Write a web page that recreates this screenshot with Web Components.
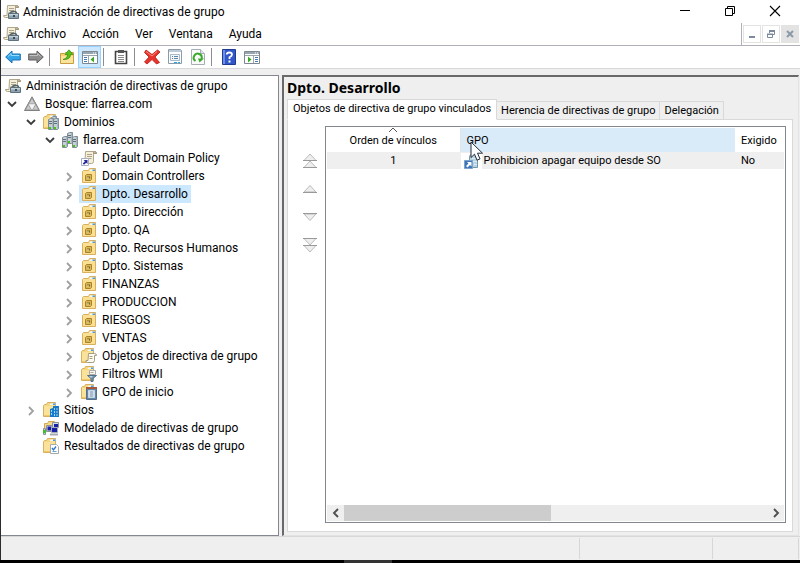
<!DOCTYPE html>
<html lang="es">
<head>
<meta charset="utf-8">
<title>Administración de directivas de grupo</title>
<style>
html, body { height: 100%; margin: 0; background: #000; }
body { font: 12px/18px Roboto, "Liberation Sans", sans-serif; color: #000; }
</style>
</head>
<body>
<gp-window>
  <title-bar slot="title">Administración de directivas de grupo</title-bar>
  <menu-bar slot="menu"></menu-bar>
  <tool-bar slot="tools"></tool-bar>
  <policy-tree slot="tree">
    <tree-node level="0" icon="console">Administración de directivas de grupo</tree-node>
    <tree-node level="1" icon="forest" state="open">Bosque: flarrea.com</tree-node>
    <tree-node level="2" icon="domains" state="open">Dominios</tree-node>
    <tree-node level="3" icon="domain" state="open">flarrea.com</tree-node>
    <tree-node level="4" icon="policy">Default Domain Policy</tree-node>
    <tree-node level="4" icon="ou" state="closed">Domain Controllers</tree-node>
    <tree-node level="4" icon="ou" state="closed" selected>Dpto. Desarrollo</tree-node>
    <tree-node level="4" icon="ou" state="closed">Dpto. Dirección</tree-node>
    <tree-node level="4" icon="ou" state="closed">Dpto. QA</tree-node>
    <tree-node level="4" icon="ou" state="closed">Dpto. Recursos Humanos</tree-node>
    <tree-node level="4" icon="ou" state="closed">Dpto. Sistemas</tree-node>
    <tree-node level="4" icon="ou" state="closed">FINANZAS</tree-node>
    <tree-node level="4" icon="ou" state="closed">PRODUCCION</tree-node>
    <tree-node level="4" icon="ou" state="closed">RIESGOS</tree-node>
    <tree-node level="4" icon="ou" state="closed">VENTAS</tree-node>
    <tree-node level="4" icon="objects" state="closed">Objetos de directiva de grupo</tree-node>
    <tree-node level="4" icon="wmi" state="closed">Filtros WMI</tree-node>
    <tree-node level="4" icon="starter" state="closed">GPO de inicio</tree-node>
    <tree-node level="2" icon="sites" state="closed">Sitios</tree-node>
    <tree-node level="2" icon="modeling">Modelado de directivas de grupo</tree-node>
    <tree-node level="2" icon="results">Resultados de directivas de grupo</tree-node>
  </policy-tree>
  <detail-pane slot="detail">
    <span slot="heading">Dpto. Desarrollo</span>
    <order-buttons></order-buttons>
    <link-list></link-list>
  </detail-pane>
  <status-bar slot="status"></status-bar>
</gp-window>

<script>
const folder = `<path d="M.5 3.500l1-1h2l1-2h8v14H.5z" fill="#f7d77f" stroke="#d9b060"/><path d="M1 4h7l1-1h3v11H1z" fill="#fbe29b"/><path d="M7.500 1.500h5v1.500h-6z" fill="#eef6ff"/><path d="M10 1.500h2.500v1.500H10z" fill="#4b9be0"/><path d="M1 13h11v1H1z" fill="#efc869"/>`;
const server = (x, y) => `<g transform="translate(${x} ${y})"><path d="M.5 1.500l2-1h3v10l-1 1h-4z" fill="#c5d0d6" stroke="#7d8b93"/><path d="M4.500 1v10l1-1V.5z" fill="#8d9aa3"/><path d="M1 3.500h3M1 5.500h3" stroke="#5f717c"/><path d="M1 9h2v2H1z" fill="#40c814"/></g>`;
const scroll = `<path d="M4.500 1.500h9q2 0 2 2h-3v8q0 2-2 2h-8q-2 0-2-2h3.500z" fill="#f5efd8" stroke="#b0a78c"/><path d="M12.500 3.500q0-2 1-2 2 0 2 2z" fill="#cbbf9d" stroke="#9f967d"/><path d="M6 4.500h5M6 6.500h5M5.500 8.500h5" stroke="#aba48f"/>`;
const arrowBox = `<path d="M.5 8.500h7v7h-7z" fill="#fff" stroke="#a7afc8"/><path d="M2.500 10H6.500v4l-1.300-1.300L3 14.800 1.800 13.500l2.200-2.200z" fill="#26269a"/>`;
const ICONS = {
  console: `${scroll}<path d="M7.500 9.500q0-2 2-2h2q2 0 2 2" fill="none" stroke="#55646d" stroke-width="1.500"/><path d="M5.500 9.500h10v5h-10z" fill="#8ea2af" stroke="#5d707c"/><path d="M6 10h9v1.500H6z" fill="#c3d1da"/><path d="M10 11h2v2h-2z" fill="#3d4b54"/>`,
  forest: `<path d="M8 .8L15.500 14.500H.5z" fill="#b9b9b9" stroke="#7a7a7a"/><path d="M8 2L11.500 8h-7zM4.300 8.500L7.700 14H1.300zM11.700 8.500L14.800 14H8.300z" fill="#c8c8c8" stroke="#8c8c8c" stroke-width=".7"/><path d="M4.800 8.300h6.400L8 14z" fill="#f4f4f4"/>`,
  domains: `${folder}${server(8, 2)}${server(5, 4)}${server(10, 4)}`,
  domain: `${server(5, 0)}${server(0, 4)}${server(10, 4)}`,
  policy: `${scroll}${arrowBox}`,
  ou: `<g transform="translate(1 0)"><path d="M.5 3.500l1-1h5l1-2h6v14H.5z" fill="#fbdf92" stroke="#d9b060"/><path d="M8 1.500h5v1.500H7.500z" fill="#eef6ff"/><path d="M10.500 1.500H13v1.500h-2.500z" fill="#4b9be0"/><path d="M3.500 7.500l1-1h5v5l-1 1h-5z" fill="#d9b653" stroke="#a5832a"/><path d="M5 8.500h3v2H5z" fill="#7d6420"/><path d="M5 9.500h2v1H5z" fill="#fff2bd"/></g>`,
  objects: `${folder}<path d="M7.500 5.500h6q2 0 2 2h-2v5q0 2-2 2h-5q-2 0-1.500-2h2z" fill="#fffdf0" stroke="#a49b84"/><path d="M8.500 8.500h3M8.500 10.500h3" stroke="#a69c80"/>`,
  wmi: `${folder}<path d="M8.500 4.500h6v4h-6z" fill="#f8f8f0" stroke="#aaa"/><path d="M9.500 6.500h3" stroke="#aaa"/><path d="M6.500 9.500h9l-3.500 3v3h-2v-3z" fill="#6f93b3" stroke="#56738c"/><path d="M8 10h4l-2 2z" fill="#b5cfe4"/>`,
  starter: `${folder}<path d="M5.500 4.500h10v11h-10z" fill="#6688a6" stroke="#557089"/><path d="M5 3h11v2H5z" fill="#a65838"/><path d="M7.500 6.500h6v7h-6z" fill="#fff" stroke="#c6d9e8"/><path d="M8.500 8h4M8.500 10h4M8.500 12h4" stroke="#5678a0"/>`,
  sites: `${folder}<path d="M7 7l3-1v-2h6v11H7z" fill="#1879c9"/><path d="M8 8h1v2H8zM8 11h1v2H8zM11 6h1v2h-1zM13.500 6h1v2h-1zM11 9h1v2h-1zM13.500 9h1v2h-1zM11 12h1v2h-1zM13.500 12h1v2h-1z" fill="#9ad8ff"/>`,
  modeling: `<path d="M1.500 3.500h3l1-2h6v8h-10z" fill="#f6da87" stroke="#cda95a"/><path d="M9.500 2.500h6v5h-6zM3.500 5.500h6v6h-6z" fill="#d9dce0" stroke="#8b9097"/><path d="M11 4h4v3h-4zM4.500 6.500h4v4h-4zM9 8h5v4H9z" fill="#1820a8"/><path d="M8.500 7.500h6v5h-6z" fill="none" stroke="#a5abb3"/><path d="M7 14.500h8" stroke="#a5abb3" stroke-width="2"/><path d="M.5 8.500h2v6h-2z" fill="#c4cdd0" stroke="#8b9097"/><path d="M0 10h3v3H0z" fill="#40c030"/>`,
  results: `${folder}<path d="M7.500 6.500h6l2 2v7h-8z" fill="#fff" stroke="#aaa"/><path d="M9 10l1.500 2L13 8.500" fill="none" stroke="#2d76c4" stroke-width="1.300"/><path d="M9.500 13.500h4" stroke="#69a5d8"/>`,
  link: `<path d="M5.500 3.500q0-2 3-2h3q2 0 2 3v10h-8z" fill="#b9d4de" stroke="#7196a8"/><path d="M8 5.500h4M9 8.500h4M10 11.500h3" stroke="#dcebf0"/><path d="M.5 7.500h8v8h-8z" fill="#3e75b6" stroke="#7ba2d0"/><path d="M3 9h4.500v4.500L6 12l-2.500 2.500L2 13l2.500-2.500z" fill="#fff"/>`,
  back: `<path d="M.7 8L7 2v3h8.300v6H7v3z" fill="#35a5e8" stroke="#1b70b2"/><path d="M3 7.500L6.200 4.500v2h8" fill="none" stroke="#9adcff"/>`,
  forward: `<path d="M15.300 8L9 2v3H.7v6H9v3z" fill="#8d8d8d" stroke="#5c5c5c"/><path d="M1.500 6.500h8v-2l3 3" fill="none" stroke="#c2c2c2"/>`,
  up: `<path d="M1.500 4.500h4l1-1h8v11h-13z" fill="#f5d174" stroke="#c79d42"/><path d="M2 7h12v7H2z" fill="#fbe39d"/><path d="M4 10.500Q8.500 9.500 8.500 5.500H6L10 .8l4 4.700h-2.500Q11.500 11 4 10.500z" fill="#52c31c" stroke="#2e8a0e" stroke-width=".7"/>`,
  showtree: `<path d="M.5 2.500h15v12H.5z" fill="#fff" stroke="#7d8890"/><path d="M1 3h14v2H1z" fill="#96a5af"/><path d="M11 4h1M13 4h1" stroke="#fff"/><path d="M1 6.500h14M6.500 7v7" stroke="#9aa5ac"/><path d="M2 8.500h3M2 10.500h3M2 12.500h3" stroke="#437ab4"/><path d="M12 7.500v6l-3.500-3z" fill="#39aa20"/>`,
  showpane: `<path d="M.5 2.500h15v12H.5z" fill="#fff" stroke="#7d8890"/><path d="M1 3h14v2H1z" fill="#96a5af"/><path d="M11 4h1M13 4h1" stroke="#fff"/><path d="M1 6.500h14M9.500 7v7" stroke="#9aa5ac"/><path d="M11 8.500h3M11 10.500h3M11 12.500h3" stroke="#437ab4"/><path d="M4 7.500v6l3.500-3z" fill="#39aa20"/>`,
  clipboard: `<path d="M2.500 2.500h11v12h-11z" fill="#fff" stroke="#444" stroke-width="1.600"/><path d="M5 1h6v3H5z" fill="#555"/><path d="M5 6.500h6M5 8.500h6M5 10.500h6M5 12.500h6" stroke="#888"/>`,
  remove: `<path d="M2 1l6 4.500L13.500 1 16 3l-5 5 4.500 5.500-3 1.500L8 10.500 3 15l-2.500-2L5 8 .5 3.500z" fill="#e6342c" stroke="#b81a18" stroke-width=".8"/><path d="M2 2.500L8 7l5-4.500" fill="none" stroke="#ff8a7d"/>`,
  properties: `<path d="M1.500.5h12l1 1v13h-13z" fill="#fff" stroke="#8c9baa"/><path d="M2 1h12v2H2z" fill="#bdcbd8"/><path d="M3.500 5.500h9v6h-9z" fill="#f2f7fb" stroke="#a8b9c8"/><path d="M5 7.500h1M7 7.500h4M5 9.500h1M7 9.500h4" stroke="#6383a0"/><path d="M7 13h3v1H7zM11 13h2v1h-2z" fill="#2ea2e8"/>`,
  refresh: `<path d="M1.500.5h9l4 4v11h-13z" fill="#fafafa" stroke="#a7aeb5"/><path d="M10.500.5v4h4" fill="#dfe3e6" stroke="#a7aeb5"/><path d="M5.500 12A4 4 0 1 1 11.500 10" fill="none" stroke="#3aaa2c" stroke-width="2"/><path d="M8 9.500h6L9.500 13.500z" fill="#3aaa2c"/>`,
  help: `<path d="M1.500.5h13v15h-13z" fill="#3157c9" stroke="#203c92"/><path d="M2 1h2v14H2z" fill="#6f8ee8"/><path d="M5.700 5.500Q5.700 3.500 8.300 3.500T11 5.500Q11 7 8.500 8.300V10" fill="none" stroke="#fff" stroke-width="1.800"/><path d="M7.500 11.500h2v2h-2z" fill="#fff"/>`,
  minimize: `<path d="M3 7.500h10" stroke="#000"/>`,
  restore: `<path d="M3.500 5.500h7v7h-7zM5.500 5V3.500h7v7H11" fill="none" stroke="#000"/>`,
  close: `<path d="M3 3l10 10M13 3L3 13" stroke="#000" stroke-width="1.100"/>`,
  mdimin: `<path d="M5 10h6v2H5z" fill="#7b8a9c"/>`,
  mdirestore: `<path d="M4.500 8.500h5v3h-5zM6.500 7V4.500h5v4H10" fill="none" stroke="#7b8a9c"/><path d="M6 4h6v2H6zM4 7.500h6v1.500H4z" fill="#7b8a9c"/>`,
  mdiclose: `<path d="M5 5l6 6M11 5l-6 6" stroke="#8c99a9" stroke-width="2"/>`,
  open: `<path d="M4 6l4 4 4-4" fill="none" stroke="#3c3c3c" stroke-width="1.800"/>`,
  closed: `<path d="M6 5l4 4-4 4" fill="none" stroke="#a0a0a0" stroke-width="1.800"/>`,
  left: `<path d="M10 4L6 8l4 4" fill="none" stroke="#505050" stroke-width="1.900"/>`,
  right: `<path d="M6 4l4 4-4 4" fill="none" stroke="#505050" stroke-width="1.900"/>`,
  sort: `<path d="M4 10l4-4 4 4" fill="none" stroke="#555"/>`,
  first: `<path d="M8 1L14 7.500H2zM8 8l6 6.500H2z" fill="#eee" stroke="#bbb"/><path d="M1 7.500h14M1 14.500h14" stroke="#999"/>`,
  previous: `<path d="M8 4.500l6 6.500H2z" fill="#eee" stroke="#bbb"/><path d="M1 11.500h14" stroke="#999"/>`,
  next: `<path d="M8 11.500L14 5H2z" fill="#eee" stroke="#bbb"/><path d="M1 4.500h14" stroke="#999"/>`,
  last: `<path d="M8 8l6-6.500H2zM8 15l6-6.500H2z" fill="#eee" stroke="#bbb"/><path d="M1 1.500h14M1 8.500h14" stroke="#999"/>`
};
const icon = name => `<gp-icon name="${name}"></gp-icon>`;
const RESET = `:host,*{box-sizing:border-box}button{font:inherit;color:inherit;border:0;padding:0;margin:0;background:none;display:flex;align-items:center;justify-content:center}`;
const define = (tag, css, html) => customElements.define(tag, class extends HTMLElement {
  constructor() {
    super();
    this.attachShadow({ mode: 'open' });
  }
  connectedCallback() {
    this.shadowRoot.innerHTML = `<style>${RESET}${css}</style>` + (typeof html === 'function' ? html(this) : html);
  }
});

define('gp-icon', `:host{display:block;flex:none;width:16px;height:16px}svg{display:block;width:100%;height:100%}`,
  el => `<svg viewBox="0 0 16 16" aria-hidden="true">${ICONS[el.getAttribute('name')]}</svg>`);

define('gp-window', `
:host{display:flex;flex-direction:column;min-height:100vh;background:#efefef;border-left:1px solid #2b2b30}
main{flex:1;display:grid;grid-template-columns:278px minmax(0,1fr);column-gap:3px;padding:6px 1px 0 0}
.edge{height:3px;background:#000;margin-left:-1px;display:flex;justify-content:center}
.edge i{width:48px;margin-right:64px;background:#333}`,
`<slot name="title"></slot><slot name="menu"></slot><slot name="tools"></slot>
<main><slot name="tree"></slot><slot name="detail"></slot></main>
<slot name="status"></slot><div class="edge"><i></i></div>`);

define('title-bar', `
:host{display:flex;align-items:center;height:23px;background:#fff;padding:0 3px 0 2px;gap:4px}
h1{flex:1;font:inherit;margin:0}
.controls{display:flex;align-self:stretch}
button{width:45px;height:21px}`,
`${icon('console')}<h1><slot></slot></h1><div class="controls">
<button aria-label="Minimizar">${icon('minimize')}</button><button aria-label="Restaurar">${icon('restore')}</button><button aria-label="Cerrar">${icon('close')}</button></div>`);

define('menu-bar', `
:host{display:flex;align-items:center;height:23px;background:#fff;border-bottom:1px solid #b0b0b8;padding-left:2px}
nav{flex:1;display:flex;gap:16px;padding-left:7px}
.mdi{display:flex;align-self:stretch;align-items:center;gap:1px;border-left:1px solid #b0b0b8;padding:0 1px}
.mdi button{width:18px;height:18px;border:1px solid #e3e3e3}
.mdi button:last-child{background:#e3e3e3}`,
`${icon('console')}<nav>${['Archivo', 'Acción', 'Ver', 'Ventana', 'Ayuda'].map(t => `<button>${t}</button>`).join('')}</nav>
<div class="mdi"><button aria-label="Minimizar ventana">${icon('mdimin')}</button><button aria-label="Restaurar ventana">${icon('mdirestore')}</button><button aria-label="Cerrar ventana">${icon('mdiclose')}</button></div>`);

define('tool-bar', `
:host{display:flex;align-items:center;height:23px;background:#fff;border-bottom:1px solid #d9d9d9}
button{width:23px;height:22px;border:1px solid transparent}
button[aria-pressed=true]{background:#cce8ff;border-color:#99d1ff}
i{width:1px;height:18px;background:#8d8d8d;margin:0 5px 0 2px}`,
(() => {
  const b = (n, l, x = '') => `<button aria-label="${l}" ${x}>${icon(n)}</button>`;
  return b('back', 'Atrás') + b('forward', 'Adelante') + '<i></i>' + b('up', 'Subir un nivel') + b('showtree', 'Mostrar árbol', 'aria-pressed="true"') +
    '<i></i>' + b('clipboard', 'Copiar') + '<i></i>' + b('remove', 'Eliminar') + b('properties', 'Propiedades') + b('refresh', 'Actualizar') +
    '<i></i>' + b('help', 'Ayuda') + b('showpane', 'Mostrar panel');
})());

define('policy-tree', `:host{display:block;background:#fff;border:1px solid #828790;border-left:0;padding-top:1px}`, `<div role="tree"><slot></slot></div>`);

define('tree-node', `
:host{display:flex;height:18px}
.pad{flex:none}
.toggle{flex:none;width:16px;margin-right:2px}
.item{gap:5px;padding:0 3px 0 2px;height:18px;white-space:nowrap}
:host([level="0"]) .toggle{display:none}
:host([selected]) .item{background:#cce8ff}`,
el => {
  const level = +el.getAttribute('level'), state = el.getAttribute('state');
  const toggle = state ? `<button class="toggle" aria-label="${state === 'open' ? 'Contraer' : 'Expandir'}">${icon(state)}</button>` : '<span class="toggle"></span>';
  return `<span class="pad" style="width:${level ? (level - 1) * 19 + 3 : 2}px"></span>${toggle}<button class="item" role="treeitem" aria-level="${level + 1}">${icon(el.getAttribute('icon'))}<slot></slot></button>`;
});

define('detail-pane', `
:host{display:flex;flex-direction:column;min-width:0;border:solid;border-color:#696969 #e3e3e3 #e3e3e3 #696969;border-width:2px 1px 1px 2px;padding:0 5px 3px 3px}
h2{margin:0;font:bold 14px/22px "Noto Sans",sans-serif;height:22px}
.tabs{display:flex;align-items:flex-end;font-size:11px;line-height:17px;margin-bottom:-1px}
.tabs button{height:19px;border:1px solid #d9d9d9;border-left:0;padding:0 4px;white-space:nowrap}
.tabs button[aria-selected=true]{height:21px;background:#fff;border-left:1px solid #d9d9d9;border-bottom-color:#fff;padding:0 5px 2px;position:relative}
.panel{flex:1;display:flex;min-height:0;background:#fff;border:1px solid #d9d9d9;padding:6px 6px 8px 0}`,
`<h2><slot name="heading"></slot></h2>
<div class="tabs" role="tablist"><button role="tab" aria-selected="true">Objetos de directiva de grupo vinculados</button><button role="tab">Herencia de directivas de grupo</button><button role="tab">Delegación</button></div>
<div class="panel" role="tabpanel"><slot></slot></div>`);

define('order-buttons', `
:host{display:flex;flex-direction:column;flex:none;width:37px;padding-top:25px;gap:8px}
button{width:100%;height:20px;padding-left:7px}`,
[['first', 'Mover al principio'], ['previous', 'Subir'], ['next', 'Bajar'], ['last', 'Mover al final']].map(([n, l]) => `<button aria-label="${l}">${icon(n)}</button>`).join(''));

define('link-list', `
:host{flex:1;min-width:0;display:flex;flex-direction:column;background:#fff;border:1px solid #828790;padding:1px;font-size:11px;line-height:17px}
.view{flex:1}
table{border-collapse:collapse;table-layout:fixed;width:100%}
th{position:relative;font-weight:normal;height:24px;padding:0 6px;text-align:left;white-space:nowrap}
td{height:17px;padding:0 6px;background:#efefef;white-space:nowrap}
.order{width:133px;text-align:center;border-right:1px solid #e5e5e5}
td.order{border-color:#efefef}
.gpo{width:275px}
th.gpo{background:#d9ebf9}
td.gpo{padding:0}
.name{display:flex;align-items:center}
.name gp-icon{background:#fff;padding:0 2px 0 3px;box-sizing:content-box}
.name span{padding-left:2px}
.sort{position:absolute;top:-6px;left:calc(50% - 8px)}
.pointer{position:absolute;left:9px;top:13px;width:14px;height:21px;z-index:1}
.scroll{display:grid;grid-template-columns:17px minmax(0,207fr) minmax(0,217fr) 17px;height:16px;background:#efefef}
.thumb{background:#cdcdcd}
.scroll button:last-child{grid-column:4}`,
`<div class="view"><table>
<thead><tr><th class="order" aria-sort="ascending">Orden de vínculos<gp-icon class="sort" name="sort"></gp-icon></th>
<th class="gpo">GPO<svg class="pointer" viewBox="0 0 14 21" aria-hidden="true"><path d="M1 1v15.500l3.500-3.300 2.500 6 3-1.300-2.500-5.700h5z" fill="#fff" stroke="#222a3c"/></svg></th><th>Exigido</th></tr></thead>
<tbody><tr><td class="order">1</td><td class="gpo"><div class="name">${icon('link')}<span>Prohibicion apagar equipo desde SO</span></div></td><td>No</td></tr></tbody>
</table></div>
<div class="scroll"><button aria-label="Desplazar a la izquierda">${icon('left')}</button><div class="thumb"></div><button aria-label="Desplazar a la derecha">${icon('right')}</button></div>`);

define('status-bar', `
:host{display:grid;grid-template-columns:minmax(0,1fr) 133px 86px;height:24px;border-top:1px solid #d7d7d7;padding:1px 1px 1px 0}
i{border-right:1px solid #d7d7d7}`, `<i></i><i></i><i></i>`);
</script>
</body>
</html>
